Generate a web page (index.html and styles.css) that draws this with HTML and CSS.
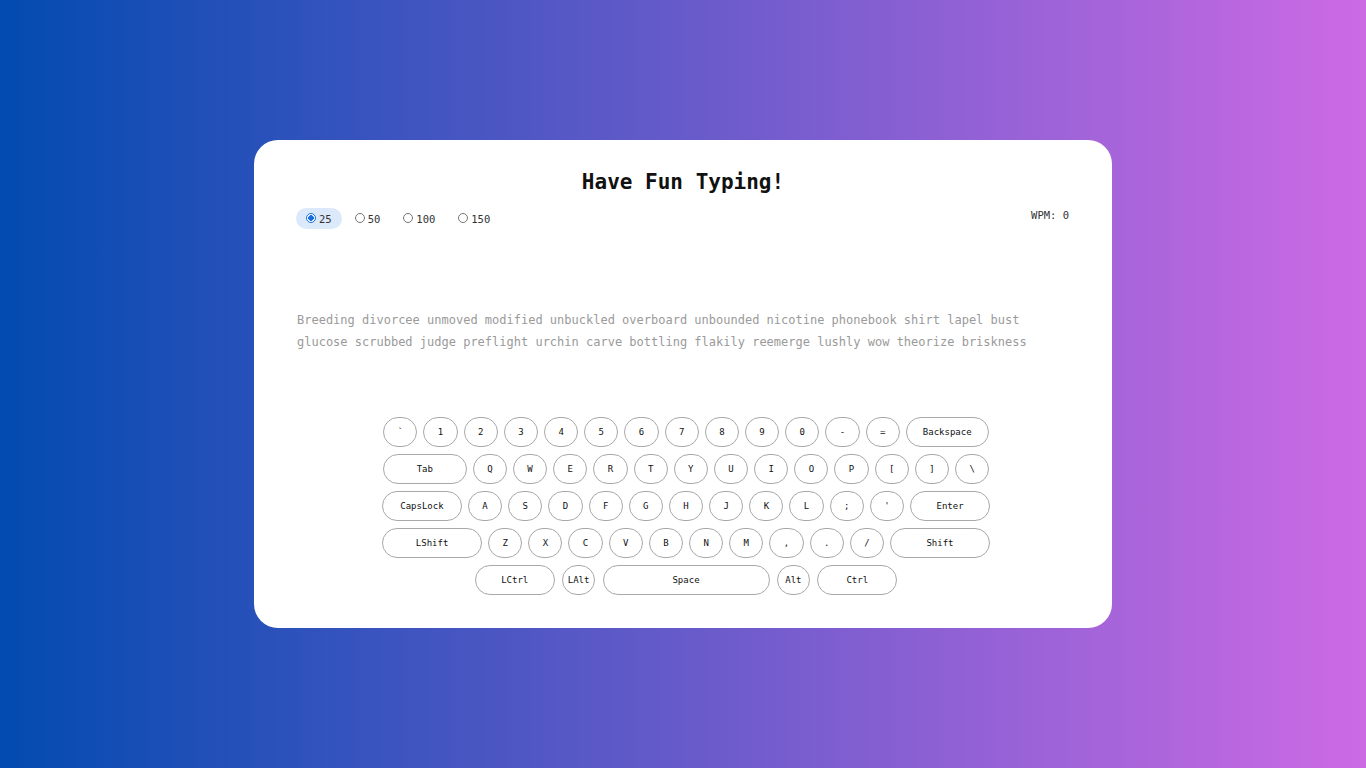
FILE: index.html
```html
<!DOCTYPE html>
<html lang="en">
<head>
<meta charset="utf-8">
<title>Have Fun Typing!</title>
<link rel="stylesheet" href="styles.css">
</head>
<body>
<main class="card">
  <h1 class="title">Have Fun Typing!</h1>
  <div class="toolbar">
    <div class="counts">
      <label class="count selected"><input type="radio" name="count" checked><span>25</span></label>
      <label class="count"><input type="radio" name="count"><span>50</span></label>
      <label class="count"><input type="radio" name="count"><span>100</span></label>
      <label class="count"><input type="radio" name="count"><span>150</span></label>
    </div>
    <div class="wpm">WPM: 0</div>
  </div>
  <p class="words">Breeding divorcee unmoved modified unbuckled overboard unbounded nicotine phonebook shirt lapel bust glucose scrubbed judge preflight urchin carve bottling flakily reemerge lushly wow theorize briskness</p>
  <div class="keyboard">
    <div class="row">
      <span class="key">`</span><span class="key">1</span><span class="key">2</span><span class="key">3</span><span class="key">4</span><span class="key">5</span><span class="key">6</span><span class="key">7</span><span class="key">8</span><span class="key">9</span><span class="key">0</span><span class="key">-</span><span class="key">=</span><span class="key w83">Backspace</span>
    </div>
    <div class="row">
      <span class="key w84">Tab</span><span class="key">Q</span><span class="key">W</span><span class="key">E</span><span class="key">R</span><span class="key">T</span><span class="key">Y</span><span class="key">U</span><span class="key">I</span><span class="key">O</span><span class="key">P</span><span class="key">[</span><span class="key">]</span><span class="key">\</span>
    </div>
    <div class="row">
      <span class="key w80">CapsLock</span><span class="key">A</span><span class="key">S</span><span class="key">D</span><span class="key">F</span><span class="key">G</span><span class="key">H</span><span class="key">J</span><span class="key">K</span><span class="key">L</span><span class="key">;</span><span class="key">'</span><span class="key w80">Enter</span>
    </div>
    <div class="row">
      <span class="key w100">LShift</span><span class="key">Z</span><span class="key">X</span><span class="key">C</span><span class="key">V</span><span class="key">B</span><span class="key">N</span><span class="key">M</span><span class="key">,</span><span class="key">.</span><span class="key">/</span><span class="key w100">Shift</span>
    </div>
    <div class="row row-bottom">
      <span class="key w80">LCtrl</span><span class="key w33">LAlt</span><span class="key w167">Space</span><span class="key w33">Alt</span><span class="key w80">Ctrl</span>
    </div>
  </div>
</main>
</body>
</html>
```

FILE: styles.css
```css
* { box-sizing: border-box; }

html, body { height: 100%; }

body {
  margin: 0;
  min-height: 100vh;
  display: flex;
  align-items: center;
  justify-content: center;
  background: linear-gradient(to right, #024bb0, #cc6ae4);
  font-family: "DejaVu Sans Mono", "Liberation Mono", monospace;
  color: #222;
}

.card {
  width: 858px;
  height: 488px;
  background: #fff;
  border-radius: 24px;
  padding: 28px 43px 33px;
  display: flex;
  flex-direction: column;
}

.title {
  margin: 0;
  height: 28px;
  line-height: 28px;
  font-size: 21px;
  font-weight: bold;
  text-align: center;
  color: #111;
}

.toolbar {
  margin-top: 12px;
  display: flex;
  justify-content: space-between;
  align-items: flex-start;
}

.counts {
  display: flex;
  gap: 3px;
  margin-left: -1px;
}

.count {
  display: flex;
  align-items: center;
  height: 21px;
  padding: 0 10px;
  border-radius: 11px;
  font-size: 10.5px;
  color: #333;
}

.count.selected { background: #dbe9fb; }

.count input {
  appearance: none;
  -webkit-appearance: none;
  margin: 0 3px 0 0;
  width: 10px;
  height: 10px;
  border: 1px solid #777;
  border-radius: 50%;
  background: #fff;
  position: relative;
  top: -1px;
}

.count input:checked {
  border-color: #1a6fe0;
  background: radial-gradient(circle, #1a6fe0 0 2.6px, #fff 3px);
}

.wpm {
  font-size: 10.5px;
  line-height: 14px;
  color: #333;
}

.words {
  margin: 80px 0 0;
  font-size: 12px;
  line-height: 22px;
  color: #9a9a9a;
  height: 44px;
}

.keyboard {
  margin-top: 64px;
  padding-left: 6px;
  display: flex;
  flex-direction: column;
  align-items: center;
  gap: 7px;
}

.row {
  display: flex;
  gap: 6px;
}

.row-bottom { gap: 7.4px; }

.key {
  width: 34.2px;
  height: 30px;
  border: 1px solid #a8a8a8;
  border-radius: 16px;
  display: flex;
  align-items: center;
  justify-content: center;
  font-size: 9px;
  color: #111;
  white-space: nowrap;
}

.w33 { width: 33px; }
.w80 { width: 80px; }
.w83 { width: 83px; }
.w84 { width: 84px; }
.w100 { width: 100px; }
.w167 { width: 167px; }
```
